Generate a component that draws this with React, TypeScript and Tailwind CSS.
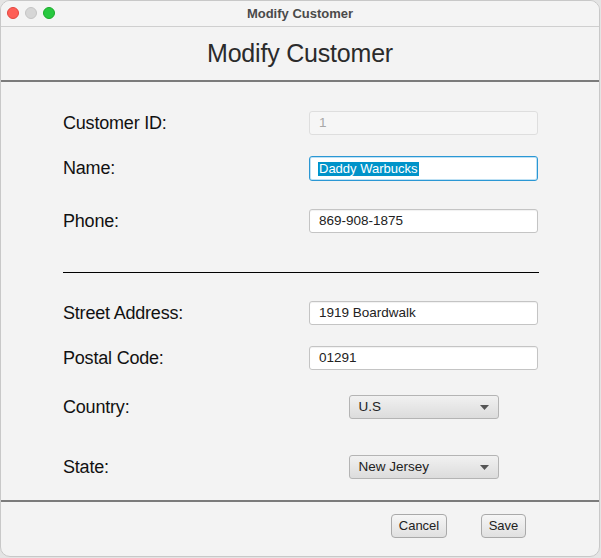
import React from "react";

const font = { fontFamily: '"Liberation Sans", Arial, sans-serif' };

function Row({ label, children, className = "" }: { label: string; children: React.ReactNode; className?: string }) {
  return (
    <div className={`flex items-center h-[24px] ${className}`}>
      <div className="w-[246px] text-[18px] text-[#111] leading-none tracking-[-0.2px]">{label}</div>
      <div className="w-[229px] h-[24px] flex justify-center">{children}</div>
    </div>
  );
}

function Field({ value }: { value: string }) {
  return (
    <div className="w-[229px] h-[24px] bg-white border border-[#c4c4c4] rounded-[3px] shadow-[inset_0_1px_1px_rgba(0,0,0,0.06)] flex items-center pl-[9px] text-[13.5px] text-[#222]">
      {value}
    </div>
  );
}

function Combo({ value }: { value: string }) {
  return (
    <div className="w-[150px] h-[24px] rounded-[3px] border border-[#b4b4b4] bg-gradient-to-b from-[#f1f1f1] to-[#dcdcdc] flex items-center pl-[9px] pr-[9px] text-[13.5px] text-[#222]">
      <span className="flex-1">{value}</span>
      <svg width="9" height="5" viewBox="0 0 9 5">
        <path d="M0 0 H9 L4.5 5 Z" fill="#555" />
      </svg>
    </div>
  );
}

export default function App() {
  return (
    <div className="w-[601px] h-[558px] bg-[#e4e4e4]" style={font}>
      <div className="w-[600px] h-[557px] bg-[#f3f3f3] rounded-[10px] border border-[#c8c8c8] overflow-hidden flex flex-col">
        <div className="h-[26px] flex items-center relative border-b border-[#cfcfcf] bg-[#f4f4f4] shrink-0">
          <div className="absolute left-[6px] top-[6px] flex gap-[6px]">
            <div className="w-[12px] h-[12px] rounded-full bg-[#fe5f57] border border-[#e2463f]" />
            <div className="w-[12px] h-[12px] rounded-full bg-[#d6d6d6] border border-[#c4c4c4]" />
            <div className="w-[12px] h-[12px] rounded-full bg-[#28c840] border border-[#1aab29]" />
          </div>
          <div className="w-full text-center text-[13px] font-bold text-[#4a4a4a]">Modify Customer</div>
        </div>
        <div className="h-[53px] flex items-center justify-center text-[25px] text-[#2b2b2b] shrink-0 tracking-[-0.2px]">
          Modify Customer
        </div>
        <div className="h-[2px] bg-[#7b7b7b] shrink-0" />
        <div className="pl-[62px] pt-[29px] flex flex-col">
          <Row label="Customer ID:">
            <div className="w-[229px] h-[24px] bg-[#f6f6f6] border border-[#dedede] rounded-[3px] flex items-center pl-[9px] text-[13.5px] text-[#a8a8a8]">1</div>
          </Row>
          <Row label="Name:" className="mt-[21px]">
            <div className="w-[229px] h-[25px] bg-white border border-[#2a97d4] rounded-[3px] shadow-[inset_0_0_0_1px_#bfe1f4] flex items-center pl-[8px] text-[13px]">
              <span className="bg-[#0093c9] text-white leading-[14px] h-[14px] px-[1px]">Daddy Warbucks</span>
            </div>
          </Row>
          <Row label="Phone:" className="mt-[29px]">
            <Field value="869-908-1875" />
          </Row>
          <div className="mt-[39px] w-[476px] h-[1px] bg-black" />
          <Row label="Street Address:" className="mt-[28px]">
            <Field value="1919 Boardwalk" />
          </Row>
          <Row label="Postal Code:" className="mt-[21px]">
            <Field value="01291" />
          </Row>
          <Row label="Country:" className="mt-[25px]">
            <Combo value="U.S" />
          </Row>
          <Row label="State:" className="mt-[36px]">
            <Combo value="New Jersey" />
          </Row>
        </div>
        <div className="mt-[21px] h-[2px] bg-[#7b7b7b] shrink-0" />
        <div className="flex justify-end pr-[73px] pt-[12px] gap-[34px]">
          <button className="w-[56px] h-[24px] rounded-[4px] border border-[#a9a9a9] bg-gradient-to-b from-[#f6f6f6] to-[#e0e0e0] text-[13px] text-[#222]">Cancel</button>
          <button className="w-[45px] h-[24px] rounded-[4px] border border-[#a9a9a9] bg-gradient-to-b from-[#f6f6f6] to-[#e0e0e0] text-[13px] text-[#222]">Save</button>
        </div>
      </div>
    </div>
  );
}
